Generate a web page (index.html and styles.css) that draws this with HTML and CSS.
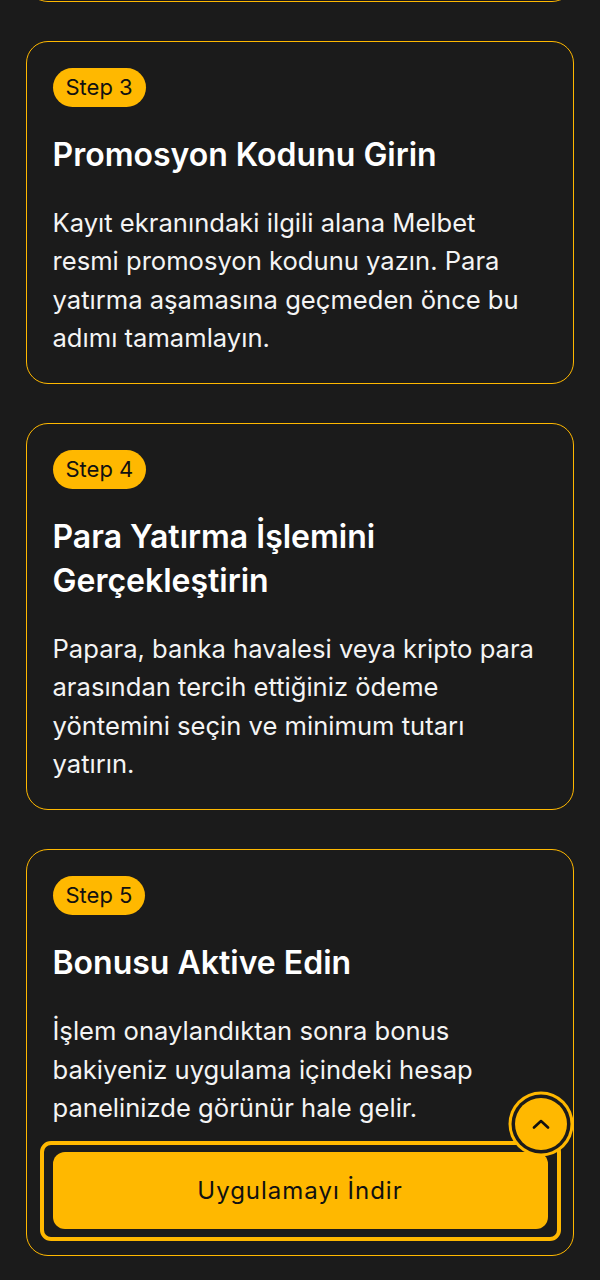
FILE: index.html
```html
<!DOCTYPE html>
<html lang="tr">
<head>
	<meta charset="UTF-8">
	<title>Melbet Promosyon Kodu Adımları</title>
	<link rel="stylesheet" href="styles.css">
</head>
<body>
	<!--adım listesi-->
	<div class="steps">
		<div class="card card-tail"></div>

		<div class="card">
			<span class="badge">Step 3</span>
			<h3 class="title">Promosyon Kodunu Girin</h3>
			<p class="text">Kayıt ekranındaki ilgili alana Melbet resmi promosyon kodunu yazın. Para yatırma aşamasına geçmeden önce bu adımı tamamlayın.</p>
		</div>

		<div class="card">
			<span class="badge">Step 4</span>
			<h3 class="title">Para Yatırma İşlemini Gerçekleştirin</h3>
			<p class="text">Papara, banka havalesi veya kripto para arasından tercih ettiğiniz ödeme yöntemini seçin ve minimum tutarı yatırın.</p>
		</div>

		<div class="card">
			<span class="badge">Step 5</span>
			<h3 class="title">Bonusu Aktive Edin</h3>
			<p class="text">İşlem onaylandıktan sonra bonus bakiyeniz uygulama içindeki hesap panelinizde görünür hale gelir.</p>
			<a href="#" class="download">Uygulamayı İndir</a>
		</div>
	</div>

	<!--yukarı çık-->
	<a href="#" class="to-top" aria-label="Yukarı">
		<svg width="18" height="10" viewBox="0 0 18 10"><path d="M2 8.5 L9 2 L16 8.5" fill="none" stroke="#111" stroke-width="2.6" stroke-linecap="round" stroke-linejoin="round"/></svg>
	</a>
</body>
</html>
```

FILE: styles.css
```css
*{
	margin:0;
	padding:0;
	box-sizing:border-box;
}

body{
	background:#1b1b1b;
	color:#f4f4f4;
	font-family:Inter,"Noto Sans",sans-serif;
}

.steps{
	display:flex;
	flex-direction:column;
	gap:39.5px;
	padding:0 26px 23px;
}

.card{
	border:1.5px solid #ffb800;
	border-radius:22px;
	padding:26px 25.5px 25.5px;
	display:flex;
	flex-direction:column;
	align-items:flex-start;
}

/* bottom edge of the previous step, scrolled out of view */
.card-tail{
	height:30px;
	margin-top:-28.5px;
	border-top:none;
	border-radius:0 0 22px 22px;
	padding:0;
}

.badge{
	background:#ffb800;
	color:#111;
	font-size:22px;
	line-height:39px;
	height:39px;
	padding:0 13px;
	border-radius:20px;
	font-weight:400;
}

.title{
	margin-top:26px;
	font-size:32px;
	line-height:44px;
	font-weight:600;
	color:#fff;
}

.text{
	margin-top:27px;
	font-size:25.6px;
	line-height:38.3px;
	color:#f4f4f4;
}

.download{
	position:relative;
	align-self:stretch;
	margin-top:25px;
	height:77px;
	display:flex;
	align-items:center;
	justify-content:center;
	background:#ffb800;
	color:#111;
	text-decoration:none;
	font-size:24px;
	letter-spacing:1px;
	border-radius:12px;
}

/* focus ring around the button */
.download::after{
	content:"";
	position:absolute;
	top:-11px;
	bottom:-12px;
	left:-13px;
	right:-13px;
	border:4px solid #ffb800;
	border-radius:11px;
}

.to-top{
	position:fixed;
	left:515px;
	top:1098px;
	width:52px;
	height:52px;
	border-radius:50%;
	background:#ffb800;
	box-shadow:0 0 0 3.5px #1b1b1b,0 0 0 6.5px #ffb800;
	display:flex;
	align-items:center;
	justify-content:center;
	z-index:2;
}
```
